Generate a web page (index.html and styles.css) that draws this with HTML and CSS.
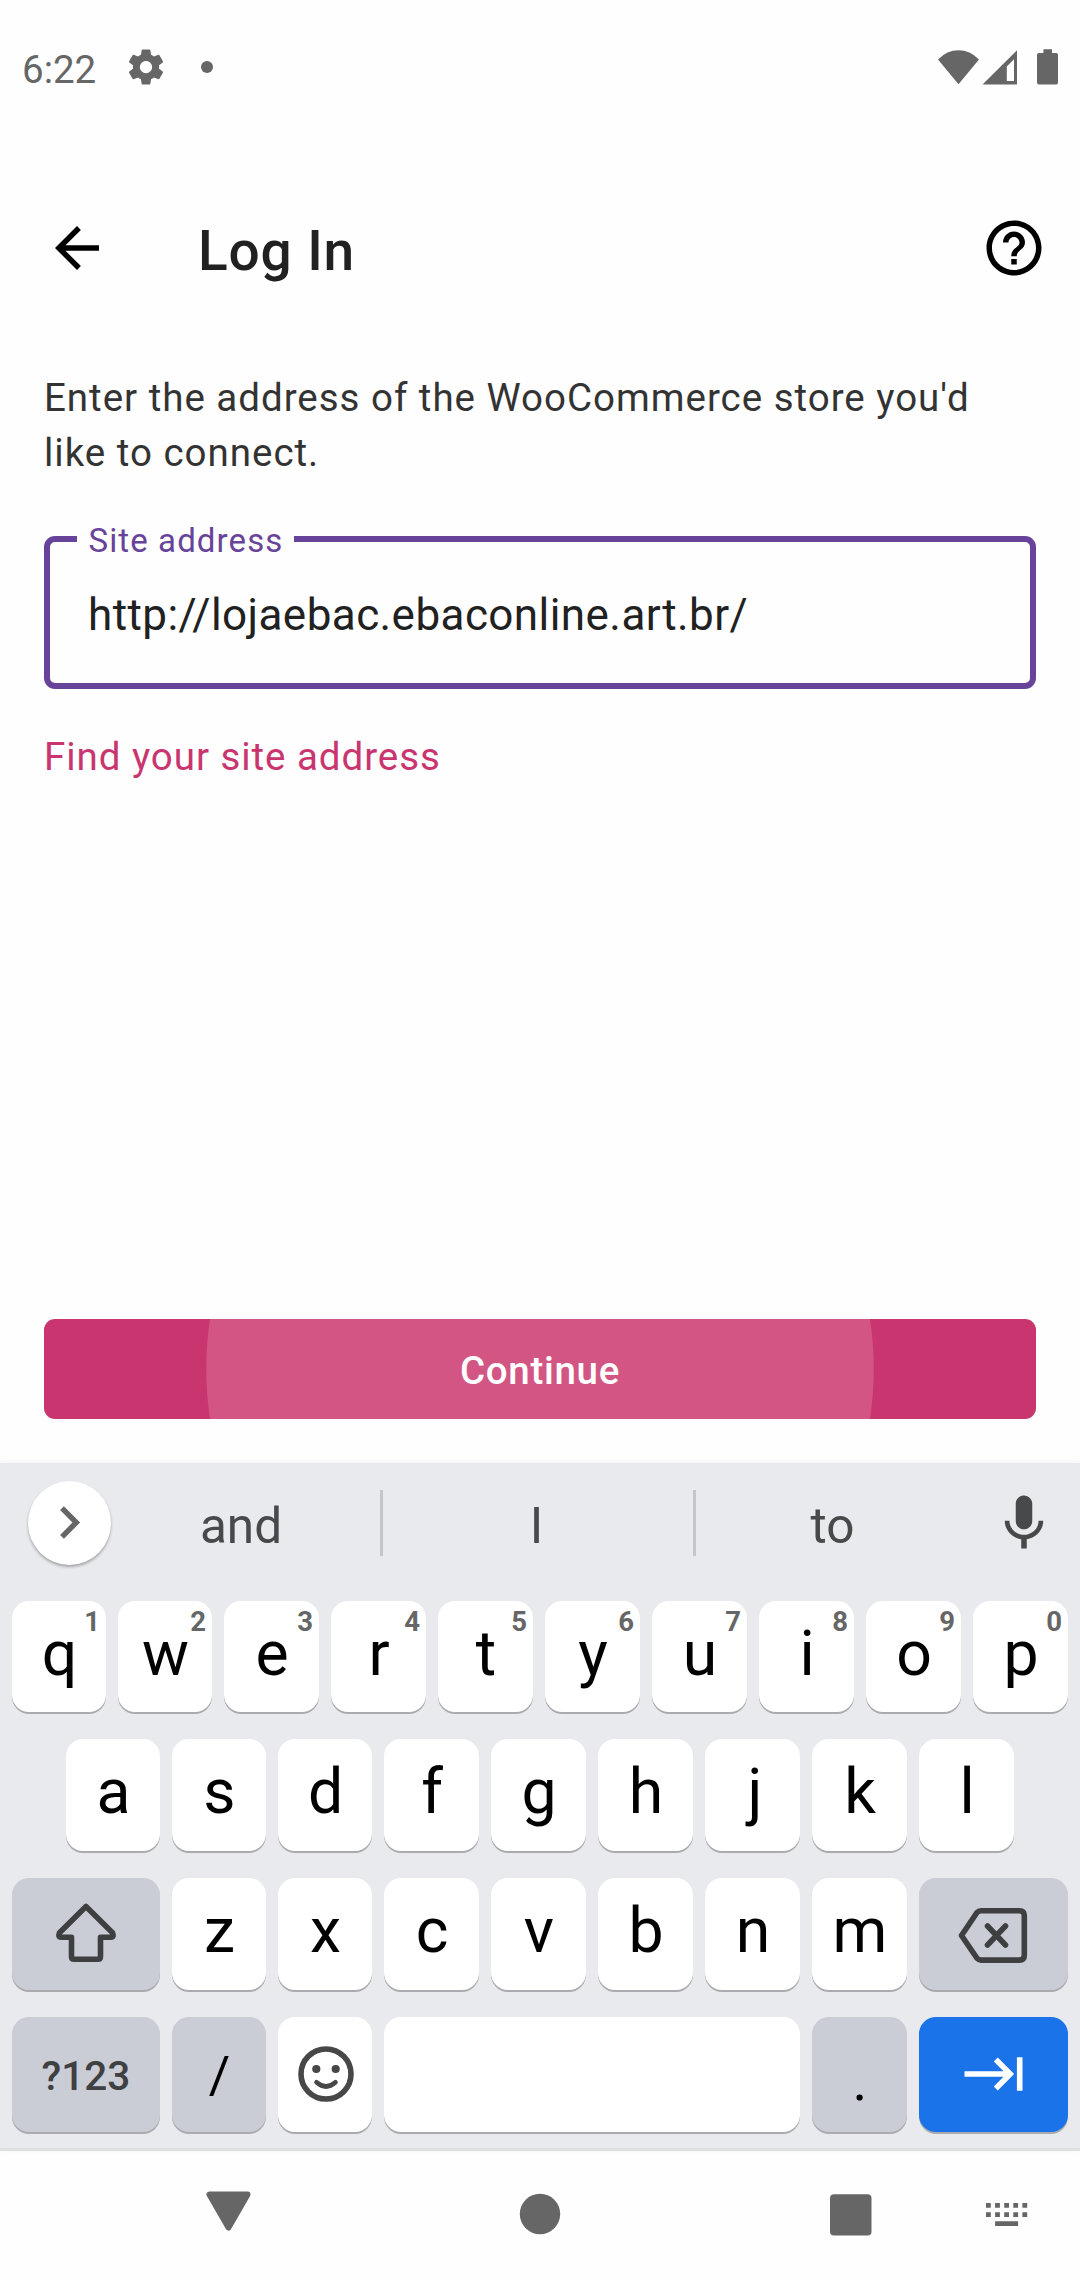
FILE: index.html
```html
<!DOCTYPE html>
<html lang="en">
<head>
<meta charset="utf-8">
<title>Log In</title>
<link rel="stylesheet" href="styles.css">
</head>
<body>
<div class="screen">
  <header class="status">
    <span class="clock">6:22</span>
    <svg class="gear" width="42" height="42" viewBox="0 0 24 24"><path d="M19.43 12.98c.04-.32.07-.64.07-.98s-.03-.66-.07-.98l2.11-1.65c.19-.15.24-.42.12-.64l-2-3.46c-.12-.22-.39-.3-.61-.22l-2.49 1c-.52-.4-1.08-.73-1.69-.98l-.38-2.65C14.46 2.18 14.25 2 14 2h-4c-.25 0-.46.18-.49.42l-.38 2.65c-.61.25-1.17.59-1.69.98l-2.49-1c-.23-.09-.49 0-.61.22l-2 3.46c-.13.22-.07.49.12.64l2.11 1.65c-.04.32-.07.65-.07.98s.03.66.07.98l-2.11 1.65c-.19.15-.24.42-.12.64l2 3.46c.12.22.39.3.61.22l2.49-1c.52.4 1.08.73 1.69.98l.38 2.65c.03.24.24.42.49.42h4c.25 0 .46-.18.49-.42l.38-2.65c.61-.25 1.17-.59 1.69-.98l2.49 1c.23.09.49 0 .61-.22l2-3.46c.12-.22.07-.49-.12-.64l-2.11-1.65zM12 15.5c-1.93 0-3.5-1.57-3.5-3.5s1.57-3.5 3.5-3.5 3.5 1.57 3.5 3.5-1.57 3.5-3.5 3.5z"/></svg>
    <span class="dot"></span>
    <svg class="signals" width="122" height="36" viewBox="0 0 122 36">
      <path d="M0 10.5Q9 1.3 20.5 1.3T41 10.5L20.5 35.2z"/>
      <path fill-rule="evenodd" d="M79 1.3V35.6H44.5zM76 10.2L68.8 17.4V32H76z"/>
      <path d="M105.4 .2H114V4h4.2Q120 4 120 5.800V33.6Q120 35.500 118.200 35.500H101Q99 35.500 99 33.600V5.800Q99 4 101 4h4.400z"/>
    </svg>
  </header>

  <nav class="appbar">
    <svg width="66" height="66" viewBox="0 0 24 24"><path d="M20 11H7.830l5.590-5.590L12 4l-8 8 8 8 1.410-1.410L7.830 13H20v-2z"/></svg>
    <h1 class="title">Log In</h1>
    <svg width="66" height="66" viewBox="0 0 24 24"><path d="M11 18h2v-2h-2v2zm1-16C6.480 2 2 6.480 2 12s4.480 10 10 10 10-4.480 10-10S17.520 2 12 2zm0 18c-4.410 0-8-3.590-8-8s3.590-8 8-8 8 3.590 8 8-3.590 8-8 8zm0-14c-2.210 0-4 1.790-4 4h2c0-1.100.9-2 2-2s2 .9 2 2c0 2-3 1.750-3 5h2c0-2.250 3-2.500 3-5 0-2.210-1.790-4-4-4z"/></svg>
  </nav>

  <main class="form">
    <p class="intro">Enter the address of the WooCommerce store you'd<br>like to connect.</p>
    <div class="field">
      <span class="label">Site address</span>
      <span class="value">http://lojaebac.ebaconline.art.br/</span>
    </div>
    <a class="find">Find your site address</a>
    <div class="continue">Continue</div>
  </main>

  <section class="keyboard">
    <div class="suggestions">
      <div class="expand"><svg width="20" height="33" viewBox="0 0 20 33"><path d="M2 2.200L16.300 16.500L2 30.800" fill="none" stroke="#666" stroke-width="5.400"/></svg></div>
      <span class="word">and</span>
      <i class="rule"></i>
      <span class="word">I</span>
      <i class="rule"></i>
      <span class="word">to</span>
      <svg class="mic" width="66" height="66" viewBox="0 0 24 24"><path d="M12 14.300c1.660 0 3-1.340 3-3V5c0-1.660-1.340-3-3-3S9 3.340 9 5v6.300c0 1.660 1.340 3 3 3zM17.300 11.200c0 3-2.540 5.100-5.300 5.100s-5.300-2.100-5.300-5.100H5c0 3.410 2.720 6.230 6 6.720V21.300h2v-3.380c3.280-.48 6-3.300 6-6.720h-1.700z"/></svg>
    </div>
    <div class="row row-q">
      <div class="key">q<sup>1</sup></div><div class="key">w<sup>2</sup></div><div class="key">e<sup>3</sup></div><div class="key">r<sup>4</sup></div><div class="key">t<sup>5</sup></div><div class="key">y<sup>6</sup></div><div class="key">u<sup>7</sup></div><div class="key">i<sup>8</sup></div><div class="key">o<sup>9</sup></div><div class="key">p<sup>0</sup></div>
    </div>
    <div class="row row-a">
      <div class="key">a</div><div class="key">s</div><div class="key">d</div><div class="key">f</div><div class="key">g</div><div class="key">h</div><div class="key j">j</div><div class="key">k</div><div class="key">l</div>
    </div>
    <div class="row row-z">
      <div class="key wide gray"><svg width="66" height="66" viewBox="0 0 66 66"><path d="M33 6.500L59.500 32.800Q61.300 37.300 58 37.300H47.500V56.500Q47.500 59.300 45 59.300H21Q18.500 59.300 18.500 56.500V37.300H8Q4.700 37.300 6.500 32.800z"/></svg></div>
      <div class="key">z</div><div class="key">x</div><div class="key">c</div><div class="key">v</div><div class="key">b</div><div class="key">n</div><div class="key">m</div>
      <div class="key wide gray backspace"><svg width="72" height="66" viewBox="0 0 72 66"><path d="M3.500 35.500L19 12.500Q20.500 10.700 23 10.700H61.500Q66.300 10.700 66.300 15.500V55.300Q66.300 60.100 61.500 60.100H23Q20.500 60.100 19 58.300zM29.500 26L47.500 45M47.500 26L29.500 45" stroke-linecap="round"/></svg></div>
    </div>
    <div class="row row-space">
      <div class="key wide gray symbols">?123</div>
      <div class="key gray slash">/</div>
      <div class="key"><svg width="66" height="66" viewBox="0 0 66 66" class="smile"><circle cx="33" cy="33" r="25"/><path d="M23.500 41.300Q33 49.700 42.500 41.300" stroke-linecap="round" stroke-width="4.600"/><circle class="eye" cx="23.300" cy="28" r="4.100"/><circle class="eye" cx="42.700" cy="28" r="4.100"/></svg></div>
      <div class="key"></div>
      <div class="key gray period">.</div>
      <div class="key wide blue"><svg width="66" height="66" viewBox="0 0 66 66"><path d="M3.500 33H50M34.800 18.600L49.200 33L34.800 47.400M58.700 16.200V49.800"/></svg></div>
    </div>
  </section>

  <footer class="navbar">
    <svg width="46" height="42" viewBox="0 0 46 42"><path d="M3.500 2.500H41.500L22.500 35.500z" stroke="#666" stroke-width="6" stroke-linejoin="round"/></svg>
    <svg width="42" height="42" viewBox="0 0 42 42"><circle cx="21" cy="21" r="20.200"/></svg>
    <svg width="42" height="42" viewBox="0 0 42 42"><rect y=".2" width="41.500" height="41.200" rx="4"/></svg>
    <svg width="42" height="24" viewBox="0 0 42 24"><path d="M0 0h4.800v4.800H0zM9.100 0h4.800v4.800H9.100zM18.200 0H23v4.800h-4.800zM27.300 0h4.800v4.800h-4.800zM36.400 0h4.800v4.800h-4.800zM0 9.200h4.800V14H0zM9.100 9.200h4.800V14H9.100zM18.200 9.200H23V14h-4.800zM27.300 9.200h4.800V14h-4.800zM36.400 9.200h4.800V14h-4.800zM9.100 18.200h23V23H9.100z"/></svg>
  </footer>
</div>
</body>
</html>
```
FILE: styles.css
```css
* { box-sizing: border-box; margin: 0; padding: 0; }
body { background: #fefefe; font-family: Roboto, "Liberation Sans", sans-serif; }
svg { display: block; flex: none; overflow: visible; }

.screen { width: 1080px; height: 2280px; display: flex; flex-direction: column; }

.status { height: 171px; padding: 46px 20px 0 22px; display: flex; align-items: flex-start; color: #666; fill: #666; }
.clock { font-size: 38.5px; line-height: 45px; width: 103px; padding-top: 1px; }
.dot { width: 12px; height: 12px; margin: 15px 0 0 34px; border-radius: 50%; background: #666; }
.signals { margin: 3px 0 0 auto; }

.appbar { height: 154px; padding: 44px 33px 0 44px; display: flex; align-items: flex-start; }
.title { flex: 1; margin-left: 88px; padding-top: 3px; font-size: 55px; font-weight: 500; line-height: 66px; letter-spacing: .85px; color: #212121; }

.form { height: 1138px; padding: 45px 44px 44px; display: flex; flex-direction: column; align-items: stretch; }
.intro { font-size: 38.5px; line-height: 55px; letter-spacing: .985px; color: #333; white-space: nowrap; }
.field { position: relative; height: 153px; margin-top: 56px; padding: 47px 38px 0; border: 6px solid #674399; border-radius: 11px; }
.label { position: absolute; left: 27px; top: -21px; width: 217px; padding-left: 11.5px; font-size: 33px; line-height: 39px; letter-spacing: 1.1px; color: #674399; background: #fefefe; white-space: nowrap; }
.value { display: block; font-size: 44px; line-height: 52px; letter-spacing: .43px; color: #212121; }
.find { margin-top: 40px; font-size: 38.5px; line-height: 55px; letter-spacing: .95px; color: #c9356e; }
.continue { height: 100px; margin-top: auto; border-radius: 11px; padding-top: 2px; text-align: center; font-size: 38.5px; font-weight: 500; line-height: 99px; letter-spacing: .7px; color: #fff;
  background: radial-gradient(circle at 50% 50%, #d35583 333.2px, #c9356e 334.2px); }

.keyboard { height: 688px; padding: 0 12px; background: #e8eaed; border-bottom: 3px solid #dedfdf; box-shadow: 0 -1px 6px rgba(0,0,0,.05); }
.suggestions { height: 120px; margin-bottom: 18px; display: flex; align-items: center; color: #47494b; fill: #47494b; }
.expand { width: 83px; height: 84px; margin: 0 -9px 1px 16px; border-radius: 50%; background: #fff; box-shadow: 0 2px 3px rgba(0,0,0,.3); display: flex; align-items: center; justify-content: center; }
.word { width: 278px; height: 120px; padding-top: 6px; line-height: 114px; font-size: 49.5px; text-align: center; }
.rule { width: 3px; height: 66px; background: #c4c6ca; }
.rule + .word { width: 310px; padding-right: 3px; }
.rule ~ .rule + .word { width: 273px; padding-right: 0; }
.mic { margin-left: 22px; }

.row { display: grid; grid-template-rows: 100%; gap: 12px; justify-content: center; height: 112px; margin-bottom: 27px; }
.row-q { height: 111px; grid-template-columns: repeat(2, 94px) repeat(8, 95px); }
.row-a { grid-template-columns: repeat(3, 94px) repeat(6, 95px); }
.row-z { grid-template-columns: 148px repeat(2, 94px) repeat(5, 95px) 149px; }
.row-space { height: 115px; margin-bottom: 0; grid-template-columns: 148px repeat(2, 94px) 416px 95px 149px; }
.key { position: relative; border-radius: 17px; background: #fff; box-shadow: 0 2px 0 #a9abae; padding-left: 1px; text-align: center; font-size: 62.5px; line-height: 105px; color: #000; }
.key sup { position: absolute; right: 6px; top: 4px; font-size: 27.5px; font-weight: 700; line-height: 33px; color: #666; }
.j { padding-left: 5px; }
.wide { padding-left: 0; }
.gray { background: #cacdd6; }
.blue { background: #1a73e8; }
.symbols { font-size: 40.5px; font-weight: 500; line-height: 118px; color: #3f4042; }
.slash { font-size: 52px; line-height: 117px; }
.period { font-size: 56px; line-height: 128px; }
.key svg { margin: 22px auto 0; fill: none; stroke: #3e3f40; stroke-width: 5.6; stroke-linejoin: round; }
.key.wide svg { margin-left: 41px; }
.key.backspace svg { margin-left: 39px; }
.key .smile { margin-top: 24px; stroke: #474747; }
.smile .eye { fill: #474747; stroke: none; }
.key.blue svg { margin: 24px 0 0 41.5px; stroke: #fff; stroke-linejoin: miter; }

.navbar { flex: 1; display: flex; padding: 42px 52px 0 206px; fill: #666; }
.navbar svg:nth-child(1) { margin-top: -1px; }
.navbar svg:nth-child(2) { margin-left: 267px; }
.navbar svg:nth-child(3) { margin-left: 269px; margin-top: .5px; }
.navbar svg:nth-child(4) { margin-left: 114px; margin-top: 10px; }
```
